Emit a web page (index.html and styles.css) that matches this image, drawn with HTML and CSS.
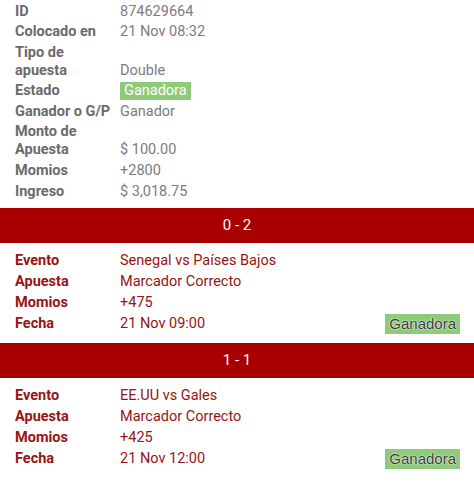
FILE: index.html
```html
<!DOCTYPE html>
<html lang="es">

<head>
    <meta charset="UTF-8">
    <meta name="viewport" content="width=device-width, initial-scale=1.0">
    <title>Detalle de apuesta</title>
    <link rel="stylesheet" href="styles.css">
</head>

<body>
    <div class="bet-summary">
        <div class="info-row"><div class="info-label">ID</div><div class="info-value">874629664</div></div>
        <div class="info-row"><div class="info-label">Colocado en</div><div class="info-value">21 Nov 08:32</div></div>
        <div class="info-row"><div class="info-label">Tipo de apuesta</div><div class="info-value">Double</div></div>
        <div class="info-row"><div class="info-label">Estado</div><div class="info-value"><span class="status-tag">Ganadora</span></div></div>
        <div class="info-row"><div class="info-label">Ganador o G/P</div><div class="info-value">Ganador</div></div>
        <div class="info-row"><div class="info-label">Monto de Apuesta</div><div class="info-value">$ 100.00</div></div>
        <div class="info-row"><div class="info-label">Momios</div><div class="info-value">+2800</div></div>
        <div class="info-row"><div class="info-label">Ingreso</div><div class="info-value">$ 3,018.75</div></div>
    </div>

    <div class="selection">
        <div class="score-bar">0 - 2</div>
        <div class="selection-body">
            <div class="sel-row"><div class="sel-label">Evento</div><div class="sel-value">Senegal vs Países Bajos</div></div>
            <div class="sel-row"><div class="sel-label">Apuesta</div><div class="sel-value">Marcador Correcto</div></div>
            <div class="sel-row"><div class="sel-label">Momios</div><div class="sel-value">+475</div></div>
            <div class="sel-row"><div class="sel-label">Fecha</div><div class="sel-value">21 Nov 09:00</div><span class="result-tag">Ganadora</span></div>
        </div>
    </div>

    <div class="selection">
        <div class="score-bar">1 - 1</div>
        <div class="selection-body">
            <div class="sel-row"><div class="sel-label">Evento</div><div class="sel-value">EE.UU vs Gales</div></div>
            <div class="sel-row"><div class="sel-label">Apuesta</div><div class="sel-value">Marcador Correcto</div></div>
            <div class="sel-row"><div class="sel-label">Momios</div><div class="sel-value">+425</div></div>
            <div class="sel-row"><div class="sel-label">Fecha</div><div class="sel-value">21 Nov 12:00</div><span class="result-tag">Ganadora</span></div>
        </div>
    </div>
</body>

</html>
```

FILE: styles.css
```css
* {
    margin: 0;
    padding: 0;
    box-sizing: border-box;
}

body {
    font-family: Roboto, "Liberation Sans", Arial, sans-serif;
    font-size: 14.5px;
    background-color: #fff;
    width: 474px;
}

.bet-summary {
    padding: 1.5px 15px 0;
}

.info-row {
    display: flex;
    align-items: flex-end;
    line-height: 18px;
    padding: 1px 0 1.6px;
}

.info-label {
    width: 105px;
    padding-right: 6px;
    font-weight: bold;
    color: #6b6b6b;
}

.info-value {
    flex: 1;
    color: #7c7c7c;
}

.status-tag {
    display: inline-block;
    background-color: #8dcb79;
    color: #fff;
    padding: 0 4px;
    line-height: 18px;
}

.selection {
    margin-top: 6px;
}

.score-bar {
    background-color: #a80000;
    color: #fff;
    text-align: center;
    height: 35px;
    line-height: 35px;
    font-size: 15px;
}

.selection-body {
    padding: 8px 14px 3px 15px;
}

.sel-row {
    display: flex;
    align-items: center;
    line-height: 18px;
    padding: 1px 0 1.75px;
    color: #961414;
}

.sel-label {
    width: 105px;
    padding-right: 6px;
    font-weight: bold;
}

.sel-value {
    flex: 1;
}

.result-tag {
    background-color: #8dcb79;
    color: #3a3a3a;
    font-family: "Liberation Sans", Arial, sans-serif;
    font-size: 15px;
    line-height: 20px;
    margin: -1px 0 -1px;
    padding: 0 4px;
    position: relative;
    top: 0;
    text-shadow: 0 0 1px #fff, 0 0 2px #fff;
}
```
